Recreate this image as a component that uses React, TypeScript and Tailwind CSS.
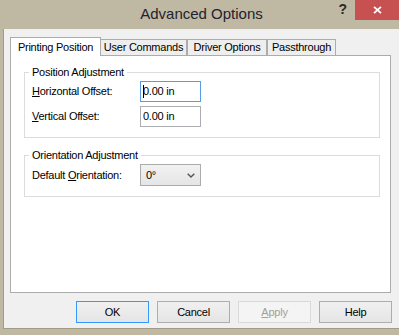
import React from "react";

function U({ children }: { children: React.ReactNode }) {
  return <span className="underline underline-offset-[1px] decoration-[1px]">{children}</span>;
}

export default function App() {
  return (
    <div className="w-[399px] h-[335px] bg-[#bfb8a2] overflow-hidden font-['Liberation_Sans',Arial,sans-serif] text-black text-[11px] tracking-[-0.25px] leading-[13px]">
      {/* Title bar */}
      <div className="relative h-[29px] flex items-start justify-center pt-[5px] pl-[4px]">
        <span className="text-[15px] leading-[17px] tracking-normal text-[#1f2330]">Advanced Options</span>
        <div className="absolute right-0 top-0 flex items-start">
          <span className="mt-[2px] mr-[8px] text-[14px] leading-[14px] font-bold tracking-normal text-[#2a2a2a]">?</span>
          <div className="w-[44px] h-[20px] bg-[#c75050] flex items-center justify-center">
            <svg width="9" height="8" viewBox="0 0 9 8">
              <path d="M1 0.8 L8 7.2 M8 0.8 L1 7.2" stroke="white" strokeWidth="1.8" fill="none" />
            </svg>
          </div>
        </div>
      </div>

      {/* Client area */}
      <div className="ml-[3px] h-[300px] bg-[#f0f0f0] border-l border-b border-[#a39b86] flex flex-col pl-[6px] pt-[8px]">
        {/* Tabs */}
        <div className="flex items-end h-[18px]">
          <div className="relative z-10 -mb-px h-[19px] w-[91px] bg-white border border-b-0 border-[#acacac] flex items-center justify-center">
            Printing Position
          </div>
          <div className="h-[16px] w-[86px] bg-[#eeeeee] border-t border-r border-[#acacac] flex items-center justify-center">
            User Commands
          </div>
          <div className="h-[16px] w-[80px] bg-[#eeeeee] border-t border-x border-[#acacac] flex items-center justify-center">
            Driver Options
          </div>
          <div className="h-[16px] w-[69px] bg-[#eeeeee] border-t border-x border-[#acacac] flex items-center justify-center">
            Passthrough
          </div>
        </div>

        {/* Panel */}
        <div className="w-[381px] h-[238px] bg-white border border-[#acacac] flex flex-col pt-[10px] pl-[13px] pr-[10px]">
          <fieldset className="border border-[#dcdcdc] pt-[2px] pb-[10px] pl-[7px]">
            <legend className="-ml-[3px] px-[3px] leading-[13px]">Position Adjustment</legend>
            <div className="grid grid-cols-[108px_61px] gap-y-[4px] items-center">
              <span>
                <U>H</U>orizontal Offset:
              </span>
              <div className="h-[21px] border border-[#569de5] bg-white flex items-center pl-[2px]">
                <span className="inline-block w-px h-[13px] bg-black mr-[-1px]" />
                <span>0.00 in</span>
              </div>
              <span>
                <U>V</U>ertical Offset:
              </span>
              <div className="h-[21px] border border-[#abadb3] bg-white flex items-center pl-[2px]">
                <span>0.00 in</span>
              </div>
            </div>
          </fieldset>

          <fieldset className="mt-[11px] border border-[#dcdcdc] pt-[2px] pb-[10px] pl-[7px]">
            <legend className="-ml-[3px] px-[3px] leading-[13px]">Orientation Adjustment</legend>
            <div className="grid grid-cols-[108px_61px] items-center">
              <span>
                Default <U>O</U>rientation:
              </span>
              <div className="h-[22px] border border-[#acacac] bg-linear-to-b from-[#f2f2f2] to-[#e5e5e5] flex items-center justify-between pl-[5px] pr-[5px]">
                <span>0°</span>
                <svg width="8" height="5" viewBox="0 0 8 5">
                  <path d="M0.7 0.7 L4 4 L7.3 0.7" stroke="#555" strokeWidth="1.4" fill="none" />
                </svg>
              </div>
            </div>
          </fieldset>
        </div>

        {/* Buttons */}
        <div className="mt-[8px] flex justify-end gap-[8px] pr-[7px]">
          <button className="w-[73px] h-[22px] border border-[#3399ff] bg-linear-to-b from-[#f0f0f0] to-[#e5e5e5] flex items-center justify-center">
            OK
          </button>
          <button className="w-[73px] h-[22px] border border-[#adadad] bg-linear-to-b from-[#f0f0f0] to-[#e5e5e5] flex items-center justify-center">
            Cancel
          </button>
          <button className="w-[73px] h-[22px] border border-[#d9d9d9] bg-[#f4f4f4] text-[#a0a0a0] flex items-center justify-center">
            <span>
              <U>A</U>pply
            </span>
          </button>
          <button className="w-[73px] h-[22px] border border-[#adadad] bg-linear-to-b from-[#f0f0f0] to-[#e5e5e5] flex items-center justify-center">
            Help
          </button>
        </div>
      </div>
    </div>
  );
}
